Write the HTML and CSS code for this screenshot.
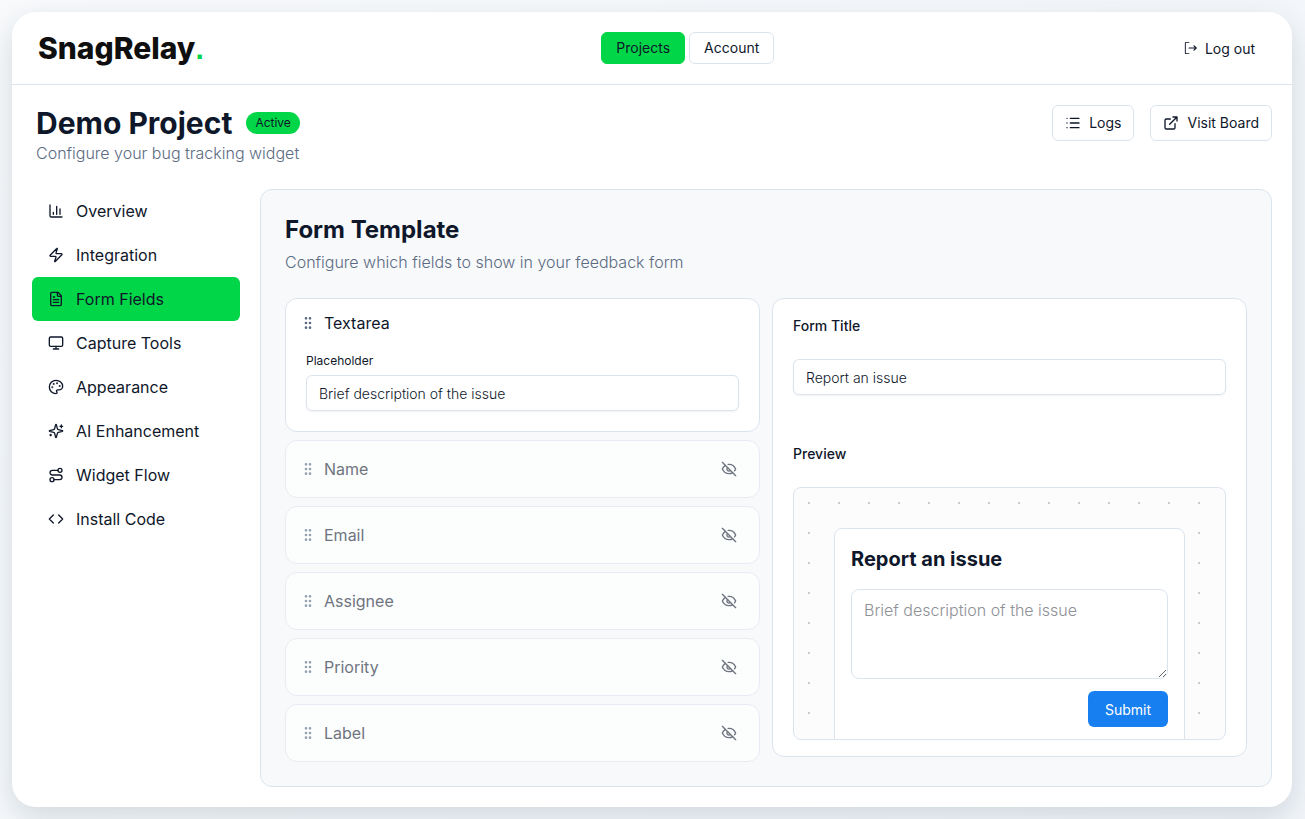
FILE: index.html
```html
<!DOCTYPE html>
<html lang="en">
<head>
  <meta charset="UTF-8">
  <meta name="viewport" content="width=device-width, initial-scale=1.0">
  <title>Demo Project - SnagRelay</title>
  <link rel="stylesheet" href="styles.css">
</head>
<body>
  <!-- shared icons -->
  <svg class="sprite" aria-hidden="true">
    <symbol id="grip" viewBox="0 0 24 24">
      <circle cx="9" cy="12" r="1"/><circle cx="9" cy="5" r="1"/><circle cx="9" cy="19" r="1"/>
      <circle cx="15" cy="12" r="1"/><circle cx="15" cy="5" r="1"/><circle cx="15" cy="19" r="1"/>
    </symbol>
    <symbol id="eye-off" viewBox="0 0 24 24">
      <path d="M9.88 9.88a3 3 0 1 0 4.24 4.24"/>
      <path d="M10.73 5.08A10.43 10.43 0 0 1 12 5c7 0 10 7 10 7a13.16 13.16 0 0 1-1.67 2.68"/>
      <path d="M6.61 6.61A13.526 13.526 0 0 0 2 12s3 7 10 7a9.74 9.74 0 0 0 5.39-1.61"/>
      <path d="M2 2l20 20"/>
    </symbol>
  </svg>

  <div class="app">
    <header class="topbar">
      <a class="logo" href="#">SnagRelay<span>.</span></a>
      <nav class="tabs">
        <a class="tab active" href="#">Projects</a>
        <a class="tab" href="#">Account</a>
      </nav>
      <button class="logout" type="button">
        <svg class="icon" viewBox="0 0 15 15"><path class="solid" d="M3 1a1 1 0 0 0-1 1v11a1 1 0 0 0 1 1h3.500a.5.5 0 0 0 0-1H3V2h3.500a.5.5 0 0 0 0-1H3z"/><path class="arrow" d="M6.500 7.500h7.500M11.800 5.200l2.300 2.300-2.300 2.300"/></svg>
        Log out
      </button>
    </header>

    <main>
      <div class="page-head">
        <div class="page-title">
          <div class="title-row">
            <h1>Demo Project</h1>
            <span class="badge">Active</span>
          </div>
          <p>Configure your bug tracking widget</p>
        </div>
        <div class="actions">
          <a class="btn" href="#">
            <svg class="icon" viewBox="0 0 24 24"><path d="M3 5h.01M3 12h.01M3 19h.01M8 5h13M8 12h13M8 19h13"/></svg>
            Logs
          </a>
          <a class="btn" href="#">
            <svg class="icon" viewBox="0 0 24 24"><path d="M15 3h6v6M10 14 21 3M18 13v6a2 2 0 0 1-2 2H5a2 2 0 0 1-2-2V8a2 2 0 0 1 2-2h6"/></svg>
            Visit Board
          </a>
        </div>
      </div>

      <div class="layout">
        <nav class="sidebar">
          <a href="#">
            <svg class="icon" viewBox="0 0 24 24"><path d="M3 3v16a2 2 0 0 0 2 2h16M18 17V9M13 17V5M8 17v-3"/></svg>
            Overview
          </a>
          <a href="#">
            <svg class="icon" viewBox="0 0 24 24"><path d="M4 14a1 1 0 0 1-.78-1.63l9.9-10.2a.5.5 0 0 1 .86.46l-1.920 6.020A1 1 0 0 0 13 10h7a1 1 0 0 1 .78 1.63l-9.900 10.200a.5.5 0 0 1-.86-.46l1.920-6.020A1 1 0 0 0 11 14z"/></svg>
            Integration
          </a>
          <a class="active" href="#">
            <svg class="icon" viewBox="0 0 24 24"><path d="M15 2H6a2 2 0 0 0-2 2v16a2 2 0 0 0 2 2h12a2 2 0 0 0 2-2V7z"/><path d="M14 2v4a2 2 0 0 0 2 2h4M10 9H8M16 13H8M16 17H8"/></svg>
            Form Fields
          </a>
          <a href="#">
            <svg class="icon" viewBox="0 0 24 24"><rect x="2" y="3" width="20" height="14" rx="2"/><path d="M8 21h8M12 17v4"/></svg>
            Capture Tools
          </a>
          <a href="#">
            <svg class="icon" viewBox="0 0 24 24"><circle class="dot" cx="13.5" cy="6.500" r=".5"/><circle class="dot" cx="17.500" cy="10.500" r=".5"/><circle class="dot" cx="8.500" cy="7.500" r=".5"/><circle class="dot" cx="6.500" cy="12.500" r=".5"/><path d="M12 2C6.500 2 2 6.500 2 12s4.500 10 10 10c.926 0 1.648-.746 1.648-1.688 0-.437-.18-.835-.437-1.125-.29-.289-.438-.652-.438-1.125a1.640 1.640 0 0 1 1.668-1.668h1.996c3.051 0 5.555-2.503 5.555-5.554C21.965 6.012 17.461 2 12 2z"/></svg>
            Appearance
          </a>
          <a href="#">
            <svg class="icon" viewBox="0 0 24 24"><path d="M9.937 15.500A2 2 0 0 0 8.500 14.063l-6.135-1.582a.5.5 0 0 1 0-.962L8.500 9.936A2 2 0 0 0 9.937 8.500l1.582-6.135a.5.5 0 0 1 .963 0L14.063 8.500A2 2 0 0 0 15.500 9.937l6.135 1.581a.5.5 0 0 1 0 .964L15.500 14.063a2 2 0 0 0-1.437 1.437l-1.582 6.135a.5.5 0 0 1-.963 0z"/><path d="M20 3v4M22 5h-4M4 17v2M5 18H3"/></svg>
            AI Enhancement
          </a>
          <a href="#">
            <svg class="icon" viewBox="0 0 24 24"><circle cx="6" cy="19" r="3"/><path d="M9 19h8.500a3.500 3.500 0 0 0 0-7h-11a3.500 3.500 0 0 1 0-7H15"/><circle cx="18" cy="5" r="3"/></svg>
            Widget Flow
          </a>
          <a href="#">
            <svg class="icon" viewBox="0 0 24 24"><path d="M16 18l6-6-6-6M8 6l-6 6 6 6"/></svg>
            Install Code
          </a>
        </nav>

        <section class="panel">
          <h2>Form Template</h2>
          <p class="lead">Configure which fields to show in your feedback form</p>

          <div class="columns">
            <div class="fields">
              <div class="field">
                <div class="field-head">
                  <svg class="icon grip"><use href="#grip"/></svg>
                  <span>Textarea</span>
                </div>
                <div class="field-body">
                  <label for="placeholder">Placeholder</label>
                  <input type="text" id="placeholder" value="Brief description of the issue">
                </div>
              </div>
              <div class="field off">
                <div class="field-head">
                  <svg class="icon grip"><use href="#grip"/></svg>
                  <span>Name</span>
                  <button type="button" aria-label="Show Name"><svg class="icon"><use href="#eye-off"/></svg></button>
                </div>
              </div>
              <div class="field off">
                <div class="field-head">
                  <svg class="icon grip"><use href="#grip"/></svg>
                  <span>Email</span>
                  <button type="button" aria-label="Show Email"><svg class="icon"><use href="#eye-off"/></svg></button>
                </div>
              </div>
              <div class="field off">
                <div class="field-head">
                  <svg class="icon grip"><use href="#grip"/></svg>
                  <span>Assignee</span>
                  <button type="button" aria-label="Show Assignee"><svg class="icon"><use href="#eye-off"/></svg></button>
                </div>
              </div>
              <div class="field off">
                <div class="field-head">
                  <svg class="icon grip"><use href="#grip"/></svg>
                  <span>Priority</span>
                  <button type="button" aria-label="Show Priority"><svg class="icon"><use href="#eye-off"/></svg></button>
                </div>
              </div>
              <div class="field off">
                <div class="field-head">
                  <svg class="icon grip"><use href="#grip"/></svg>
                  <span>Label</span>
                  <button type="button" aria-label="Show Label"><svg class="icon"><use href="#eye-off"/></svg></button>
                </div>
              </div>
            </div>

            <div class="settings">
              <label class="caption" for="formTitle">Form Title</label>
              <input type="text" id="formTitle" value="Report an issue">
              <h3 class="caption">Preview</h3>
              <div class="preview">
                <form class="widget">
                  <h4>Report an issue</h4>
                  <textarea aria-label="Description" placeholder="Brief description of the issue"></textarea>
                  <button type="button">Submit</button>
                </form>
              </div>
            </div>
          </div>
        </section>
      </div>
    </main>
  </div>
</body>
</html>
```
FILE: styles.css
```css
* {
  box-sizing: border-box;
}
body {
  margin: 0;
  padding: 12px;
  min-height: 100vh;
  display: flex;
  background: linear-gradient(135deg, #f8fafc, #f1f5f9);
  color: #0f172a;
  font-family: Inter, sans-serif;
  font-size: 16px;
  line-height: 24px;
}
h1, h2, h3, h4, p {
  margin: 0;
}
a {
  color: inherit;
  text-decoration: none;
}
button, input, textarea {
  font-family: inherit;
  color: inherit;
}
button {
  background: none;
  border: none;
  padding: 0;
  cursor: pointer;
}
.sprite {
  display: none;
}
.icon {
  width: 16px;
  height: 16px;
  flex: none;
  fill: none;
  stroke: currentColor;
  stroke-width: 2;
  stroke-linecap: round;
  stroke-linejoin: round;
}
.icon .solid {
  fill: currentColor;
  stroke: none;
}
.icon .arrow {
  stroke-width: 1.3;
}
.icon .dot {
  fill: currentColor;
}

.app {
  width: 100%;
  max-width: 1280px;
  background: white;
  border-radius: 24px;
  box-shadow: 0 10px 30px rgba(15, 40, 60, 0.15);
}
.topbar {
  display: flex;
  justify-content: space-between;
  align-items: center;
  padding: 20px 24px;
  border-bottom: 1px solid #dbe4ee;
}
.logo {
  padding: 0 2px;
  font-size: 30px;
  line-height: 32px;
  font-weight: 800;
  color: #0f0f0f;
}
.logo span {
  color: #00d647;
  font-family: "Liberation Sans", sans-serif;
  line-height: 1;
}
.tabs {
  display: flex;
  gap: 4px;
}
.tab, .logout, .btn {
  display: flex;
  align-items: center;
  gap: 8px;
  height: 32px;
  padding: 0 14px;
  border: 1px solid #dbe4ee;
  border-radius: 6px;
  font-size: 14px;
}
.tab.active {
  background: #00d647;
  border-color: #00d647;
}
.logout {
  padding: 0 12px;
  border-color: transparent;
}
.logout .icon {
  width: 14px;
  height: 14px;
}

main {
  padding: 20px;
}
.page-head {
  display: flex;
  justify-content: space-between;
  align-items: flex-start;
  padding-left: 4px;
  margin-bottom: 24px;
}
.title-row {
  display: flex;
  align-items: center;
  gap: 14px;
}
h1 {
  font-size: 30px;
  line-height: 36px;
  font-weight: 700;
}
.page-title p, .lead {
  color: #5b6b82;
  font-weight: 350;
}
.badge {
  padding: 0 9px;
  border-radius: 11px;
  background: #00d647;
  font-size: 12px;
  line-height: 22px;
}
.actions {
  display: flex;
  gap: 16px;
}
.btn {
  height: 36px;
  padding: 0 12px;
}

.layout {
  display: grid;
  grid-template-columns: 208px 1fr;
  gap: 20px;
}
.sidebar a {
  display: flex;
  align-items: center;
  gap: 12px;
  height: 44px;
  padding: 0 16px;
  border-radius: 6px;
}
.sidebar a.active {
  background: #00d647;
}
.panel {
  padding: 24px;
  border: 1px solid #dbe4ee;
  border-radius: 12px;
  background: #f8f9fb;
}
h2 {
  margin-bottom: 4px;
  font-size: 24px;
  line-height: 32px;
  font-weight: 700;
}
.columns {
  display: grid;
  grid-template-columns: 1fr 1fr;
  align-items: start;
  gap: 12px;
  margin-top: 24px;
}
.fields {
  display: grid;
  gap: 8px;
}
.field, .settings {
  border: 1px solid #dbe4ee;
  border-radius: 12px;
  background: white;
}
.field-head {
  display: flex;
  align-items: center;
  gap: 8px;
  padding: 12px 14px;
}
.field-head button {
  display: flex;
  align-items: center;
  justify-content: center;
  width: 32px;
  height: 32px;
  margin-left: auto;
}
.field.off {
  border-color: #e7ecf3;
  background: #fcfefd;
  color: #6f7480;
}
.grip {
  color: #5b6b82;
}
.off .grip {
  color: #94a0b0;
}
.field-body {
  padding: 6px 20px 20px;
}
.field-body label {
  display: block;
  margin-bottom: 6px;
  font-size: 12px;
  line-height: 16px;
}
input {
  display: block;
  width: 100%;
  height: 36px;
  padding: 0 12px;
  border: 1px solid #dbe4ee;
  border-radius: 6px;
  background: white;
  box-shadow: 0 1px 2px rgba(0, 0, 0, 0.05);
  font-size: 14px;
  font-weight: 350;
}

.settings {
  padding: 20px 20px 16px;
}
.caption {
  display: block;
  margin-bottom: 26px;
  font-size: 14px;
  line-height: 14px;
  font-weight: 500;
}
h3.caption {
  margin-top: 52px;
}
/* the widget is taller than the preview and gets cut off */
.preview {
  height: 253px;
  padding: 40px;
  overflow: hidden;
  border: 1px solid #dbe4ee;
  border-radius: 8px;
  background: #fcfcfc radial-gradient(#ccc 1px, transparent 1px) 0 0 / 30px 30px;
}
.widget {
  display: flex;
  flex-direction: column;
  height: 260px;
  padding: 16px;
  border: 1px solid #dbe4ee;
  border-radius: 8px;
  background: white;
}
.widget h4 {
  margin-bottom: 16px;
  font-size: 20px;
  line-height: 28px;
  font-weight: 700;
}
.widget textarea {
  height: 90px;
  padding: 8px 12px;
  border: 1px solid #dbe4ee;
  border-radius: 8px;
  font-size: 16px;
  line-height: 24px;
  resize: vertical;
}
.widget textarea::placeholder {
  color: #8e9196;
  font-weight: 350;
}
.widget button {
  align-self: flex-end;
  min-width: 80px;
  height: 36px;
  margin-top: 12px;
  padding: 0 16px;
  border-radius: 6px;
  background: #177ff0;
  color: white;
  font-size: 14px;
}
```
